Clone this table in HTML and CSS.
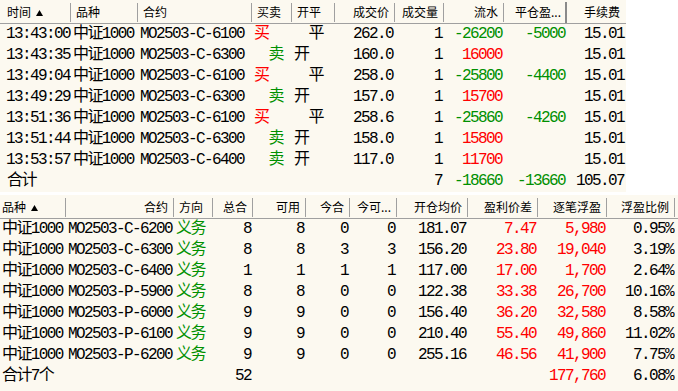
FILE: index.html
```html
<!DOCTYPE html>
<html lang="zh-CN">
<head>
<meta charset="utf-8">
<title>成交与持仓</title>
<link rel="stylesheet" href="styles.css">
</head>
<body>
<div class="page">
  <section class="top">
    <div class="trow hdr">
      <div class="h first">时间 <svg class="arrow" width="7" height="6" viewBox="0 0 7 6"><path d="M3.5 0L7 6H0Z" fill="#000"/></svg></div>
      <div class="h">品种</div>
      <div class="h">合约</div>
      <div class="h">买卖</div>
      <div class="h">开平</div>
      <div class="h hr">成交价</div>
      <div class="h hr">成交量</div>
      <div class="h hr">流水</div>
      <div class="h hr dark">平仓盈...</div>
      <div class="h hr nosep">手续费</div>
    </div>
    <div class="trow">
      <div class="c tm">13:43:00</div><div class="c">中证1000</div><div class="c">MO2503-C-6100</div><div class="c red">买</div><div class="c">　平</div><div class="c r">262.0</div><div class="c r">1</div><div class="c r grn">-26200</div><div class="c r grn">-5000</div><div class="c r">15.01</div>
    </div>
    <div class="trow">
      <div class="c tm">13:43:35</div><div class="c">中证1000</div><div class="c">MO2503-C-6300</div><div class="c grn">　卖</div><div class="c">开</div><div class="c r">160.0</div><div class="c r">1</div><div class="c r red">16000</div><div class="c r"></div><div class="c r">15.01</div>
    </div>
    <div class="trow">
      <div class="c tm">13:49:04</div><div class="c">中证1000</div><div class="c">MO2503-C-6100</div><div class="c red">买</div><div class="c">　平</div><div class="c r">258.0</div><div class="c r">1</div><div class="c r grn">-25800</div><div class="c r grn">-4400</div><div class="c r">15.01</div>
    </div>
    <div class="trow">
      <div class="c tm">13:49:29</div><div class="c">中证1000</div><div class="c">MO2503-C-6300</div><div class="c grn">　卖</div><div class="c">开</div><div class="c r">157.0</div><div class="c r">1</div><div class="c r red">15700</div><div class="c r"></div><div class="c r">15.01</div>
    </div>
    <div class="trow">
      <div class="c tm">13:51:36</div><div class="c">中证1000</div><div class="c">MO2503-C-6100</div><div class="c red">买</div><div class="c">　平</div><div class="c r">258.6</div><div class="c r">1</div><div class="c r grn">-25860</div><div class="c r grn">-4260</div><div class="c r">15.01</div>
    </div>
    <div class="trow">
      <div class="c tm">13:51:44</div><div class="c">中证1000</div><div class="c">MO2503-C-6300</div><div class="c grn">　卖</div><div class="c">开</div><div class="c r">158.0</div><div class="c r">1</div><div class="c r red">15800</div><div class="c r"></div><div class="c r">15.01</div>
    </div>
    <div class="trow">
      <div class="c tm">13:53:57</div><div class="c">中证1000</div><div class="c">MO2503-C-6400</div><div class="c grn">　卖</div><div class="c">开</div><div class="c r">117.0</div><div class="c r">1</div><div class="c r red">11700</div><div class="c r"></div><div class="c r">15.01</div>
    </div>
    <div class="trow">
      <div class="c sum">合计</div><div class="c"></div><div class="c"></div><div class="c"></div><div class="c"></div><div class="c r"></div><div class="c r">7</div><div class="c r grn">-18660</div><div class="c r grn">-13660</div><div class="c r">105.07</div>
    </div>
  </section>

  <section class="bottom">
    <div class="brow hdr">
      <div class="h bfirst">品种 <svg class="arrow" width="7" height="6" viewBox="0 0 7 6"><path d="M3.5 0L7 6H0Z" fill="#000"/></svg></div>
      <div class="h hr">合约</div>
      <div class="h">方向</div>
      <div class="h hr">总合</div>
      <div class="h hr">可用</div>
      <div class="h hr">今合</div>
      <div class="h hr">今可...</div>
      <div class="h hr">开仓均价</div>
      <div class="h hr">盈利价差</div>
      <div class="h hr">逐笔浮盈</div>
      <div class="h hr">浮盈比例</div>
    </div>
    <div class="brow">
      <div class="c">中证1000</div><div class="c r">MO2503-C-6200</div><div class="c grn">义务</div><div class="c r">8</div><div class="c r">8</div><div class="c r">0</div><div class="c r">0</div><div class="c r">181.07</div><div class="c r red">7.47</div><div class="c r red">5,980</div><div class="c r">0.95%</div>
    </div>
    <div class="brow">
      <div class="c">中证1000</div><div class="c r">MO2503-C-6300</div><div class="c grn">义务</div><div class="c r">8</div><div class="c r">8</div><div class="c r">3</div><div class="c r">3</div><div class="c r">156.20</div><div class="c r red">23.80</div><div class="c r red">19,040</div><div class="c r">3.19%</div>
    </div>
    <div class="brow">
      <div class="c">中证1000</div><div class="c r">MO2503-C-6400</div><div class="c grn">义务</div><div class="c r">1</div><div class="c r">1</div><div class="c r">1</div><div class="c r">1</div><div class="c r">117.00</div><div class="c r red">17.00</div><div class="c r red">1,700</div><div class="c r">2.64%</div>
    </div>
    <div class="brow">
      <div class="c">中证1000</div><div class="c r">MO2503-P-5900</div><div class="c grn">义务</div><div class="c r">8</div><div class="c r">8</div><div class="c r">0</div><div class="c r">0</div><div class="c r">122.38</div><div class="c r red">33.38</div><div class="c r red">26,700</div><div class="c r">10.16%</div>
    </div>
    <div class="brow">
      <div class="c">中证1000</div><div class="c r">MO2503-P-6000</div><div class="c grn">义务</div><div class="c r">9</div><div class="c r">9</div><div class="c r">0</div><div class="c r">0</div><div class="c r">156.40</div><div class="c r red">36.20</div><div class="c r red">32,580</div><div class="c r">8.58%</div>
    </div>
    <div class="brow">
      <div class="c">中证1000</div><div class="c r">MO2503-P-6100</div><div class="c grn">义务</div><div class="c r">9</div><div class="c r">9</div><div class="c r">0</div><div class="c r">0</div><div class="c r">210.40</div><div class="c r red">55.40</div><div class="c r red">49,860</div><div class="c r">11.02%</div>
    </div>
    <div class="brow">
      <div class="c">中证1000</div><div class="c r">MO2503-P-6200</div><div class="c grn">义务</div><div class="c r">9</div><div class="c r">9</div><div class="c r">0</div><div class="c r">0</div><div class="c r">255.16</div><div class="c r red">46.56</div><div class="c r red">41,900</div><div class="c r">7.75%</div>
    </div>
    <div class="brow">
      <div class="c wide">合计7个</div><div class="c r"></div><div class="c r">52</div><div class="c r"></div><div class="c r"></div><div class="c r"></div><div class="c r"></div><div class="c r"></div><div class="c r red">177,760</div><div class="c r">6.08%</div>
    </div>
  </section>
</div>
</body>
</html>
```

FILE: styles.css
```css
html, body {
  margin: 0;
  padding: 0;
  background: #ffffff;
}

.page {
  width: 678px;
  height: 391px;
  overflow: hidden;
  display: flex;
  flex-direction: column;
}

.top {
  width: 626px;
  background: #fcf9f0;
}

.bottom {
  margin-top: 3px;
  flex: 1;
  background: #fcf9f0;
}

.trow {
  display: grid;
  grid-template-columns: 71px 67px 114px 40px 43px 60px 49px 60px 63px 59px;
  height: 21px;
}

.brow {
  display: grid;
  grid-template-columns: 66px 108px 39px 40px 53px 44px 47px 71px 70px 69px 68px;
  height: 21px;
}

.hdr {
  height: 23px;
  border-bottom: 1px solid #a0a0a0;
}

.h {
  font-family: "Noto Sans CJK SC", sans-serif;
  font-size: 12px;
  line-height: 23px;
  color: #000;
  padding: 0 5px;
  white-space: nowrap;
  overflow: hidden;
  background: linear-gradient(#a0a0a0, #a0a0a0) right 3px / 1px 19px no-repeat;
}

.h.hr {
  text-align: right;
  padding-right: 6px;
}

.h.first {
  padding-left: 7px;
}

.h.bfirst {
  padding-left: 2px;
}

.h.dark {
  background: linear-gradient(90deg, #8a8a8a 0 2px, transparent 2px) right 2px / 2px 21px no-repeat;
}

.h.nosep {
  background: none;
}

.arrow {
  margin-left: 2px;
  vertical-align: 1px;
}

.c {
  font-family: "Liberation Mono", "Noto Sans CJK SC", monospace;
  font-size: 16px;
  letter-spacing: -1.6px;
  line-height: 21px;
  color: #000;
  padding: 0 2px;
  white-space: nowrap;
  overflow: hidden;
}

.c.r {
  text-align: right;
  padding: 0 2px 0 0;
}

.c.tm {
  padding-left: 6px;
}

.c.sum {
  padding-left: 7px;
}

.c.wide {
  grid-column: span 2;
}

.red {
  color: #ff0000 !important;
}

.grn {
  color: #009000 !important;
}
```
